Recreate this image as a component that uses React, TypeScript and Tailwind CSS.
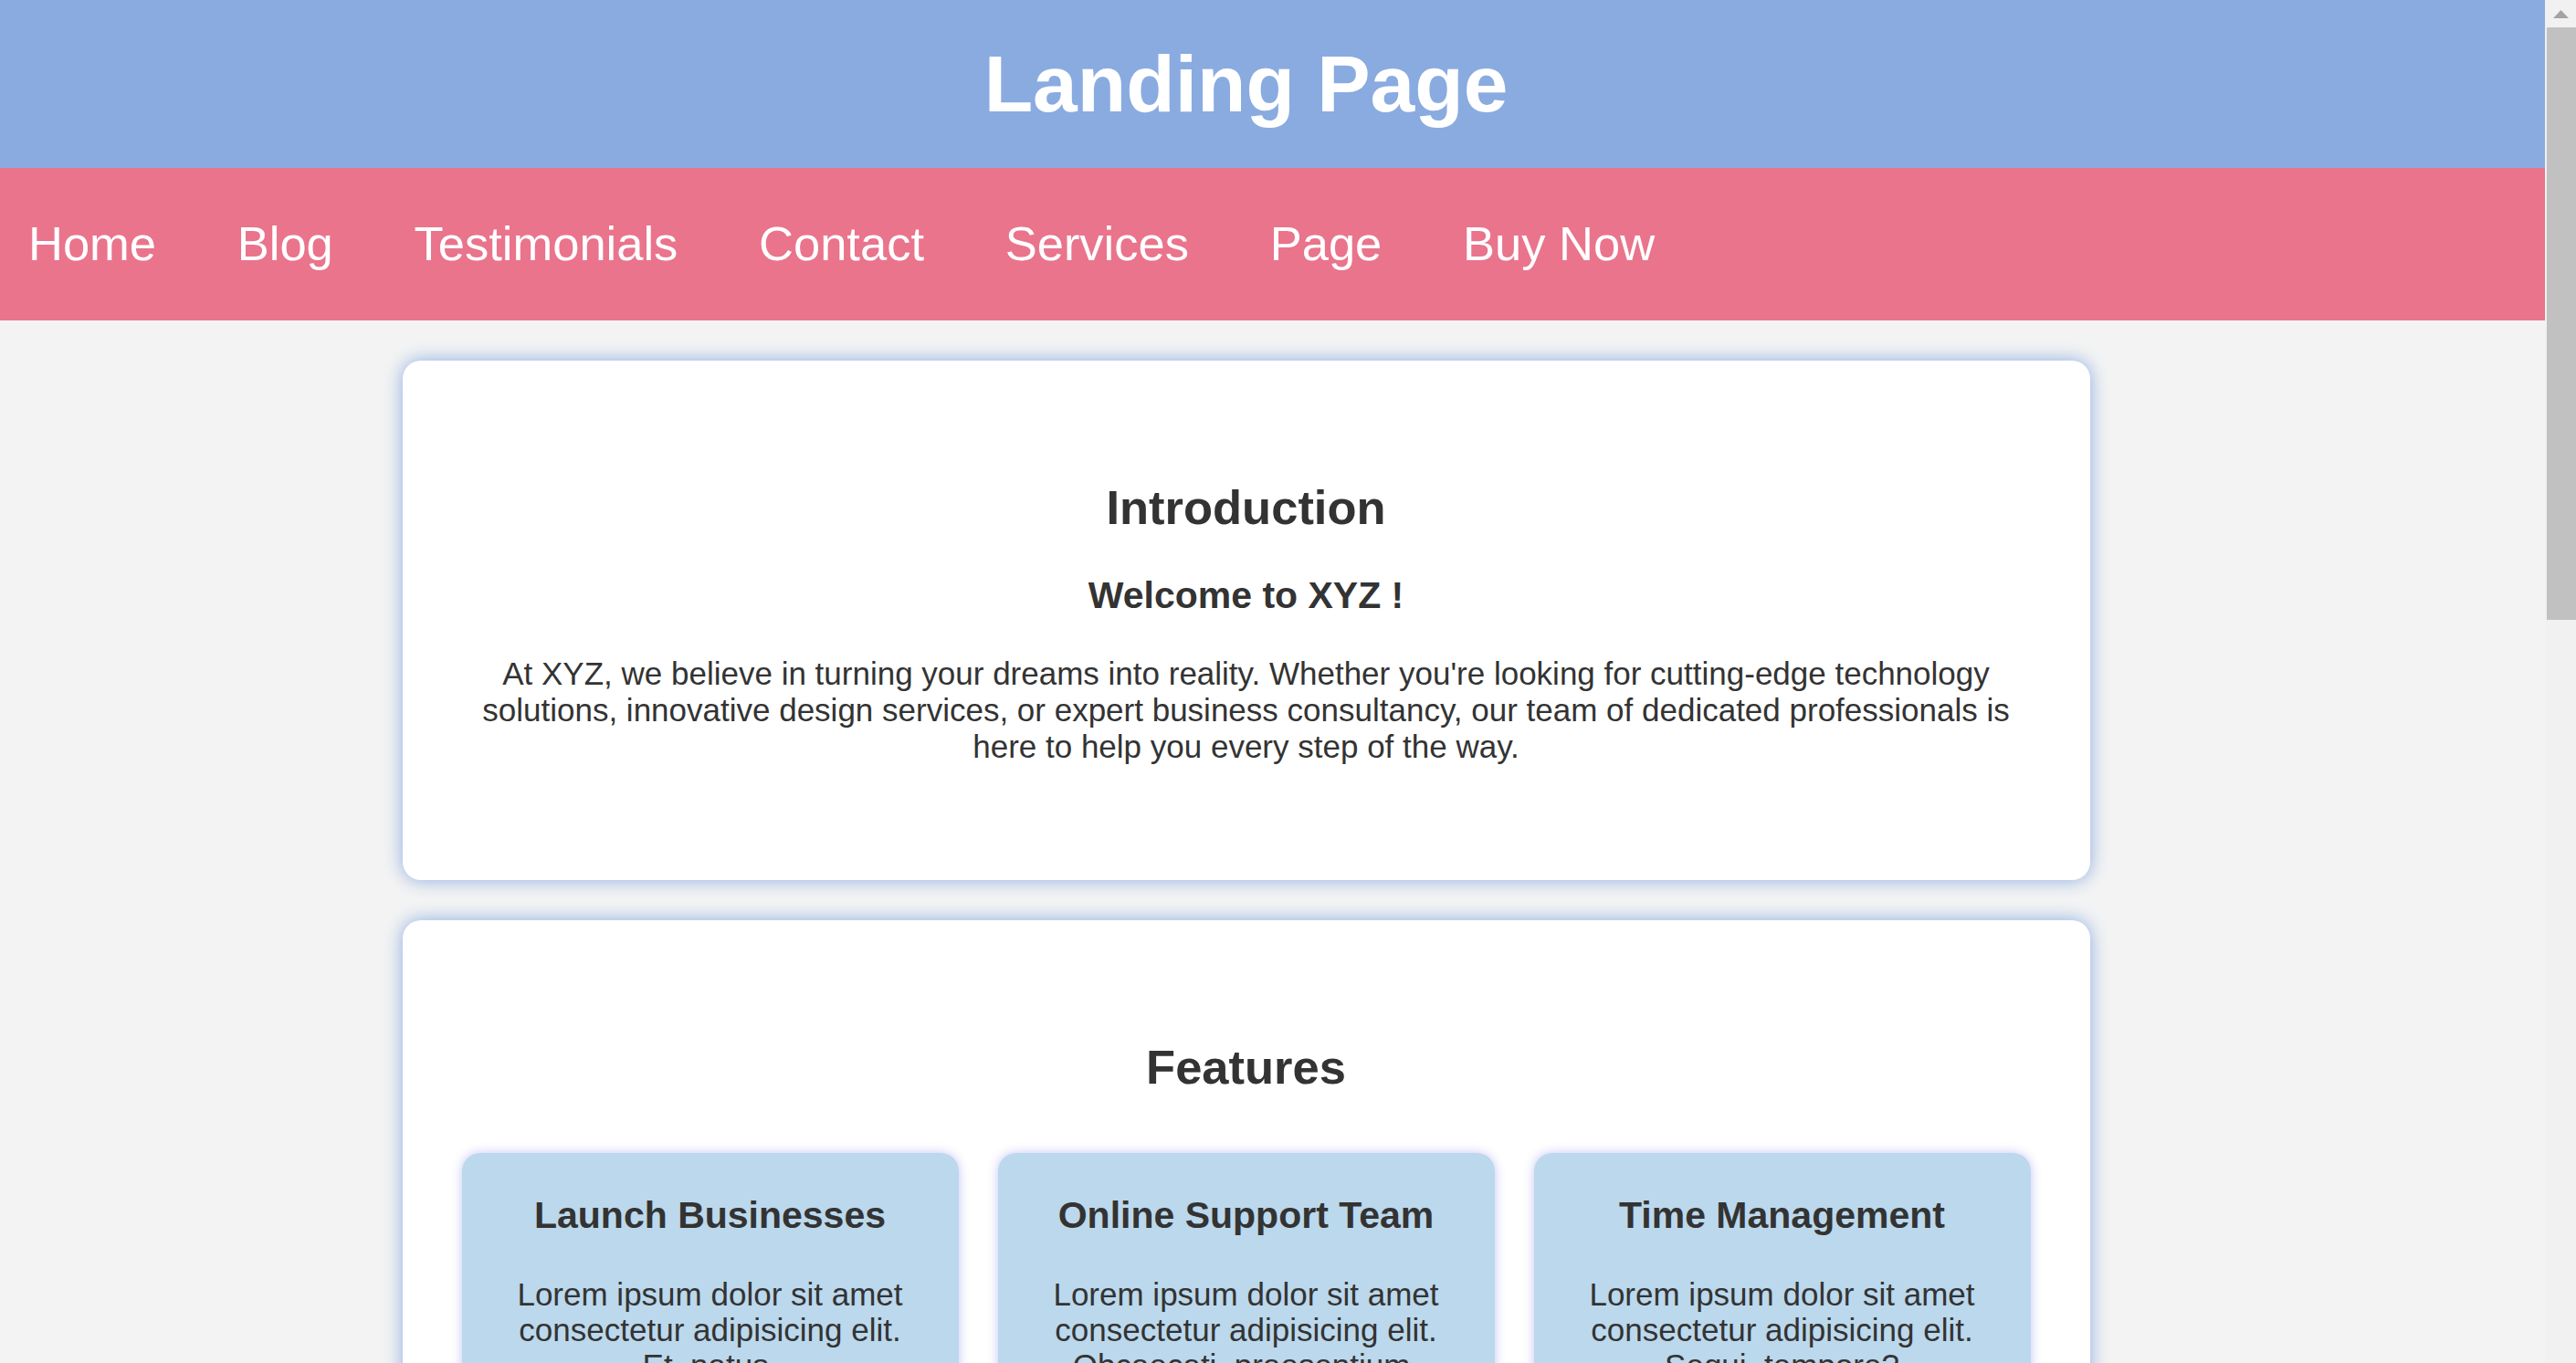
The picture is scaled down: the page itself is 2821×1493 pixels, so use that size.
const links = ["Home", "Blog", "Testimonials", "Contact", "Services", "Page", "Buy Now"];

const features = [
  {
    title: "Launch Businesses",
    text: "Lorem ipsum dolor sit amet consectetur adipisicing elit. Et, natus.",
  },
  {
    title: "Online Support Team",
    text: "Lorem ipsum dolor sit amet consectetur adipisicing elit. Obcaecati, praesentium.",
  },
  {
    title: "Time Management",
    text: "Lorem ipsum dolor sit amet consectetur adipisicing elit. Sequi, tempore?",
  },
];

export default function App() {
  return (
    <div className="flex h-[1493px] overflow-hidden bg-[#f3f3f3] font-['Liberation_Sans',Arial,sans-serif] leading-[1.149] text-[#333]">
      <div className="min-w-0 flex-1">

        {/* Header */}
        <header className="flex h-[184px] items-center justify-center bg-[#8aabe0] pr-[58px]">
          <h1 className="text-[87.5px] font-bold text-white">Landing Page</h1>
        </header>

        {/* Nav */}
        <nav className="flex h-[167px] items-center gap-[88.7px] bg-[#e9748c] pl-[31px]">
          {links.map((link) => (
            <a key={link} href="#" className="text-[52.5px] text-white">
              {link}
            </a>
          ))}
        </nav>

        <main className="pr-[58px] pt-[44px]">

          {/* Introduction */}
          <section className="mx-auto mb-[44px] w-[1848px] rounded-[20px] bg-white px-[65px] pb-[127px] pt-[131px] text-center shadow-[0_0_20px_#8aabe0]">
            <h2 className="mb-[43px] text-[52.5px] font-bold">Introduction</h2>
            <h3 className="mb-[42px] text-[41px] font-bold">Welcome to XYZ !</h3>
            <p className="text-[35px] leading-[39.6px]">
              At XYZ, we believe in turning your dreams into reality. Whether you're looking for
              cutting-edge technology solutions, innovative design services, or expert business
              consultancy, our team of dedicated professionals is here to help you every step of
              the way.
            </p>
          </section>

          {/* Features */}
          <section className="mx-auto w-[1848px] rounded-[20px] bg-white px-[65px] pb-[123px] pt-[131px] text-center shadow-[0_0_20px_#8aabe0]">
            <h2 className="text-[52.5px] font-bold">Features</h2>
            <div className="mt-[63px] grid grid-cols-3 gap-[43px]">
              {features.map((f) => (
                <div
                  key={f.title}
                  className="rounded-[20px] bg-[#bbd8ec] px-[45px] pb-[45px] pt-[45px] shadow-[0_0_12px_rgba(190,190,245,0.9)]"
                >
                  <h3 className="text-[41px] font-bold">{f.title}</h3>
                  <p className="mt-[43px] text-[35px] leading-[39px]">{f.text}</p>
                </div>
              ))}
            </div>
          </section>

        </main>
      </div>

      {/* Scrollbar */}
      <div className="flex w-[34px] shrink-0 flex-col bg-[#f1f1f1]">
        <div className="flex h-[30px] items-center justify-center">
          <svg width="17" height="9" viewBox="0 0 17 9">
            <polygon points="8.5,0 17,9 0,9" fill="#a3a3a3" />
          </svg>
        </div>
        <div className="ml-[2px] h-[649px] bg-[#c1c1c1]" />
      </div>
    </div>
  );
}
